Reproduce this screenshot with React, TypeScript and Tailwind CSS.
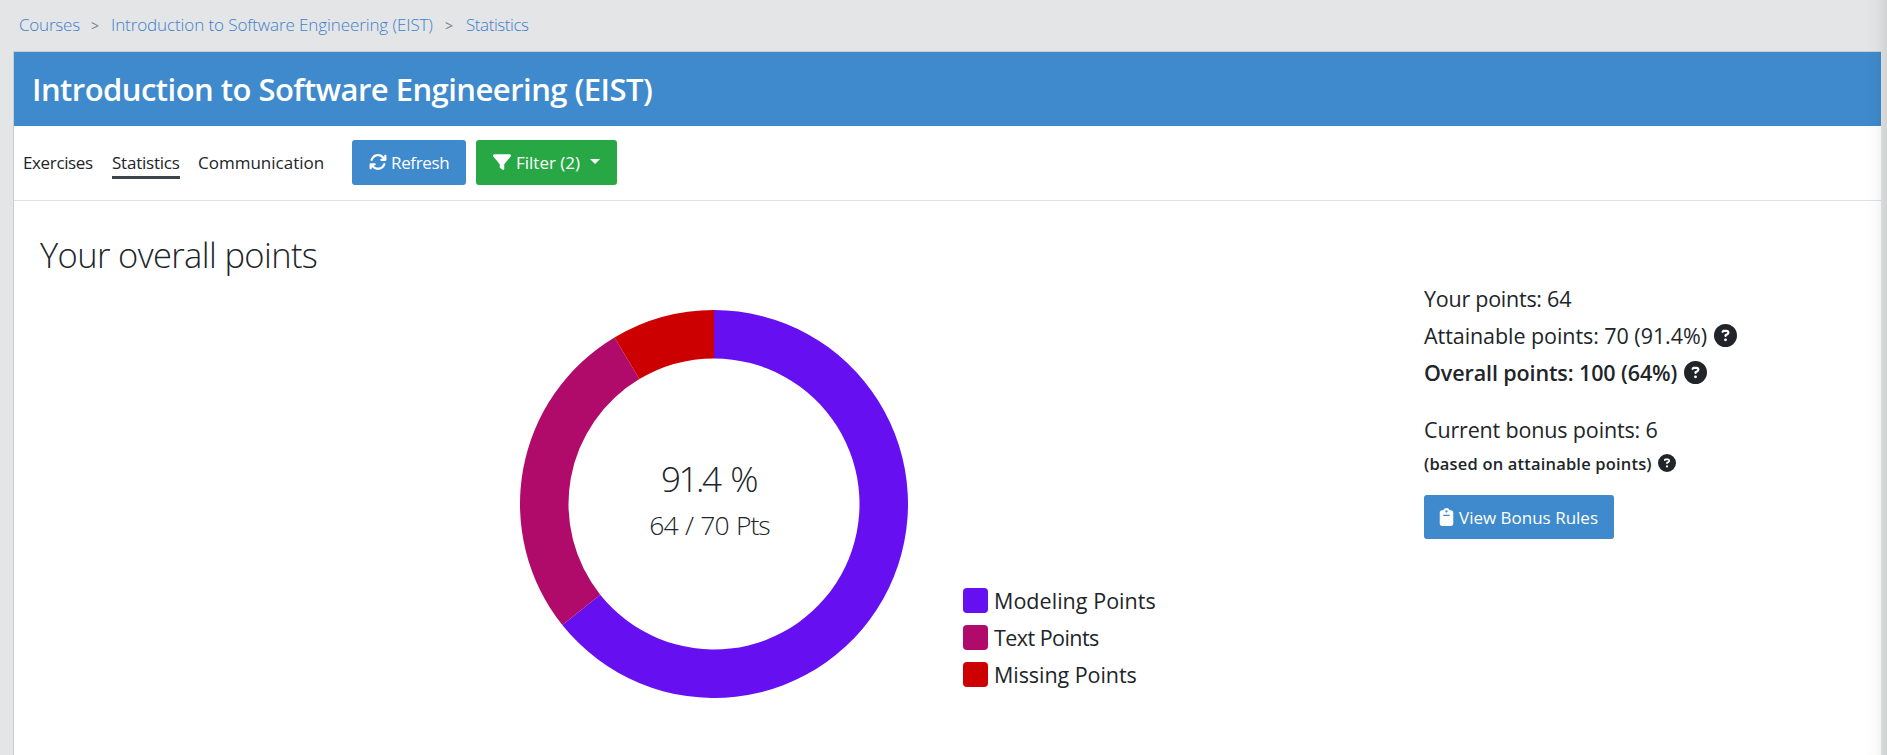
import { FaArrowsRotate, FaFilter, FaCircleQuestion, FaClipboard } from 'react-icons/fa6';

const slices = [
  { label: 'Modeling Points', value: 45, color: '#6610f2', swatch: 'bg-[#6610f2]', text: 'tracking-[0.04px]' },
  { label: 'Text Points', value: 19, color: '#b00b6b', swatch: 'bg-[#b00b6b]', text: 'tracking-[-0.55px]' },
  { label: 'Missing Points', value: 6, color: '#cc0000', swatch: 'bg-[#cc0000]', text: 'tracking-[-0.06px]' },
];

const OUTER = 194;
const INNER = 145.5;

function point(radius: number, fraction: number) {
  const angle = fraction * Math.PI * 2;
  return `${(OUTER + radius * Math.sin(angle)).toFixed(2)} ${(OUTER - radius * Math.cos(angle)).toFixed(2)}`;
}

function arc(start: number, end: number) {
  const large = end - start > 0.5 ? 1 : 0;
  return [
    `M ${point(OUTER, start)}`,
    `A ${OUTER} ${OUTER} 0 ${large} 1 ${point(OUTER, end)}`,
    `L ${point(INNER, end)}`,
    `A ${INNER} ${INNER} 0 ${large} 0 ${point(INNER, start)}`,
    'Z',
  ].join(' ');
}

function Donut() {
  const total = slices.reduce((sum, s) => sum + s.value, 0);
  let position = 0;
  return (
    <svg className="col-start-1 row-start-1 size-[388px]" viewBox="0 0 388 388">
      {slices.map((s) => {
        const start = position / total;
        position += s.value;
        return <path key={s.label} d={arc(start, position / total)} fill={s.color} />;
      })}
    </svg>
  );
}

function Breadcrumbs() {
  return (
    <nav className="flex h-[51px] items-start pt-[13px] pl-[19px] text-[17px] leading-6 font-light text-[#3e7fcc]">
      <a className="w-[72px] tracking-[-0.2px]">Courses</a>
      <span className="w-[20px] pt-px text-[14px] font-normal text-[#73818f]">&gt;</span>
      <a className="w-[334px] tracking-[-0.1px]">Introduction to Software Engineering (EIST)</a>
      <span className="w-[21px] pt-px text-[14px] font-normal text-[#73818f]">&gt;</span>
      <a className="tracking-[-0.44px]">Statistics</a>
    </nav>
  );
}

function Toolbar() {
  return (
    <div className="flex h-[75px] items-center border-b border-[#dee2e6] pb-[2px] pl-[9px] text-[17px] leading-[27px]">
      <a className="mr-[18px] w-[71px] tracking-[-0.36px]">Exercises</a>
      <a className="relative mr-[18px] w-[68px] tracking-[-0.23px] after:absolute after:top-[27px] after:left-0 after:h-[3px] after:w-full after:bg-[#3d444b]">
        Statistics
      </a>
      <a className="w-[154px]">Communication</a>
      <button className="flex h-[45px] w-[114px] items-center rounded-[3px] bg-[#3e8acc] pl-[17px] text-white">
        <FaArrowsRotate className="mr-[4px] size-[18px]" />
        <span className="tracking-[-0.35px]">Refresh</span>
      </button>
      <button className="ml-[10px] flex h-[45px] w-[141px] items-center rounded-[3px] bg-[#28a745] pl-[17px] text-white">
        <FaFilter className="mr-[5px] size-[18px]" />
        <span className="w-[74px] text-left">Filter (2)</span>
        <span className="mb-[2px] border-x-[5px] border-t-[5px] border-x-transparent border-t-white" />
      </button>
    </div>
  );
}

function Summary() {
  return (
    <aside className="flex w-[457px] shrink-0 flex-col items-start pt-[79px] text-[21.5px] leading-[37px]">
      <p className="tracking-[-0.25px]">Your points: 64</p>
      <p className="flex items-center">
        <span className="w-[290px] tracking-[-0.06px]">Attainable points: 70 (91.4%)</span>
        <FaCircleQuestion className="size-[23px]" />
      </p>
      <p className="flex items-center font-semibold">
        <span className="w-[260px] tracking-[-0.11px]">Overall points: 100 (64%)</span>
        <FaCircleQuestion className="size-[23px]" />
      </p>
      <p className="mt-[20px] tracking-[-0.16px]">Current bonus points: 6</p>
      <p className="flex h-[30px] items-center text-[16.5px] font-semibold">
        <span className="w-[234px] tracking-[0.18px]">(based on attainable points)</span>
        <FaCircleQuestion className="size-[18px]" />
      </p>
      <button className="mt-[17px] flex h-[44px] w-[190px] items-center rounded-[3px] bg-[#3e8acc] pl-[14px] text-[17px] leading-[27px] text-white">
        <FaClipboard className="mr-[4px] h-[18px] w-[17px]" />
        View Bonus Rules
      </button>
    </aside>
  );
}

export default function App() {
  return (
    <div className="relative flex h-[755px] flex-col overflow-hidden bg-[#e4e5e6] font-['Open_Sans',sans-serif] text-[#212529]">
      <Breadcrumbs />
      <main className="mr-[6px] ml-[13px] flex flex-1 flex-col border-t border-l border-[#c8ced3] bg-white">
        <header className="flex h-[74px] items-center bg-[#3e8acc] pl-[18px] text-[31px] font-semibold tracking-[-0.53px] text-white">
          <h1>Introduction to Software Engineering (EIST)</h1>
        </header>
        <Toolbar />
        <div className="flex flex-1">
          <section className="flex flex-1 flex-col">
            <h2 className="mt-[33px] ml-[26px] text-[34.5px] leading-[42px] font-light tracking-[-0.62px]">
              Your overall points
            </h2>
            <div className="mt-[34px] ml-[506px] flex items-end">
              <div className="grid place-items-center">
                <Donut />
                <div className="col-start-1 row-start-1 flex flex-col items-center pr-[9px] pb-[4px] font-light">
                  <p className="mr-[2px] text-[35px] leading-[47px] tracking-[-2.4px] [word-spacing:4px]">91.4 %</p>
                  <p className="text-[26.5px] leading-[47px] tracking-[-1px] [word-spacing:1.5px]">64 / 70 Pts</p>
                </div>
              </div>
              <ul className="mb-[5px] ml-[55px] text-[21.5px] leading-[37px]">
                {slices.map((s) => (
                  <li key={s.label} className="flex items-center gap-[6px]">
                    <span className={`size-[25px] rounded-[4px] ${s.swatch}`} />
                    <span className={s.text}>{s.label}</span>
                  </li>
                ))}
              </ul>
            </div>
          </section>
          <Summary />
        </div>
      </main>
      <div className="pointer-events-none absolute inset-y-0 right-0 w-[22px] bg-linear-to-r from-black/0 via-black/2 to-black/8" />
    </div>
  );
}
